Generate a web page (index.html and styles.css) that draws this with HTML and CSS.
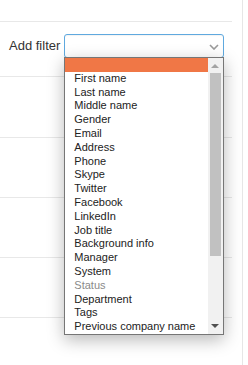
FILE: index.html
```html
<!DOCTYPE html>
<html lang="en">
<head>
    <meta charset="UTF-8">
    <title>Filters</title>
    <link rel="stylesheet" href="styles.css">
</head>
<body>
    <div class="page">
        <div class="panel">
            <div class="row row-head"></div>
            <div class="row row-filter">
                <label class="filter-label" for="filter">Add filter</label>
                <div class="select" id="filter">
                    <svg class="chevron" width="10" height="6" viewBox="0 0 10 6">
                        <path d="M1 1 L5 5 L9 1" fill="none" stroke="#9a9a9a" stroke-width="1.6"/>
                    </svg>
                    <div class="popup">
                        <ul class="options">
                            <li class="selected"></li>
                            <li>First name</li>
                            <li>Last name</li>
                            <li>Middle name</li>
                            <li>Gender</li>
                            <li>Email</li>
                            <li>Address</li>
                            <li>Phone</li>
                            <li>Skype</li>
                            <li>Twitter</li>
                            <li>Facebook</li>
                            <li>LinkedIn</li>
                            <li>Job title</li>
                            <li>Background info</li>
                            <li>Manager</li>
                            <li>System</li>
                            <li class="disabled">Status</li>
                            <li>Department</li>
                            <li>Tags</li>
                            <li>Previous company name</li>
                        </ul>
                        <div class="scrollbar">
                            <span class="arrow arrow-up"></span>
                            <span class="thumb"></span>
                            <span class="arrow arrow-down"></span>
                        </div>
                    </div>
                </div>
            </div>
            <div class="row row-first"></div>
            <div class="row"></div>
            <div class="row"></div>
            <div class="row"></div>
        </div>
        <div class="edge"></div>
    </div>
</body>
</html>
```

FILE: styles.css
```css
* {
    box-sizing: border-box;
    font-family: 'Liberation Sans', Arial, sans-serif;
}

body {
    margin: 0;
    background-color: #fff;
    color: #333;
}

.page {
    display: flex;
    height: 365px;
}

.panel {
    width: 232px;
}

.edge {
    width: 1px;
    margin-left: 10px;
    background-color: #e6e6e6;
}

.row {
    height: 60px;
    border-bottom: 1px solid #e8e8e8;
}

.row-head {
    height: 22px;
}

.row-first {
    height: 61px;
}

.row-filter {
    height: 55px;
    display: flex;
    align-items: flex-start;
    padding: 12px 0 0 9px;
}

.filter-label {
    font-size: 13px;
    line-height: 24px;
    margin-right: 4px;
    color: #333;
}

.select {
    position: relative;
    width: 160px;
    height: 24px;
    border: 1px solid #5fa9df;
    border-radius: 3px;
    background-color: #fff;
    box-shadow: inset 0 1px 1px rgba(0, 0, 0, 0.05);
}

.chevron {
    position: absolute;
    right: 4px;
    top: 9px;
}

.popup {
    position: absolute;
    top: 22px;
    left: -1px;
    width: 160px;
    height: 278px;
    border: 1px solid #767676;
    background-color: #fff;
    display: flex;
    box-shadow: 0 5px 16px rgba(0, 0, 0, 0.28);
    z-index: 2;
}

.options {
    list-style: none;
    margin: 0;
    padding: 0;
    flex: 1;
}

.options li {
    height: 13.8px;
    line-height: 13.8px;
    font-size: 11px;
    padding-left: 9px;
    color: #222;
    white-space: nowrap;
}

.options .selected {
    background-color: #f07746;
}

.options .disabled {
    color: #8a8a8a;
}

.scrollbar {
    position: relative;
    width: 15px;
    background-color: #f1f1f1;
}

.thumb {
    position: absolute;
    top: 15px;
    left: 2px;
    width: 11px;
    height: 183px;
    background-color: #c1c1c1;
}

.arrow {
    position: absolute;
    left: 3px;
    width: 0;
    height: 0;
    border-left: 4px solid transparent;
    border-right: 4px solid transparent;
}

.arrow-up {
    top: 6px;
    border-bottom: 4px solid #a3a3a3;
}

.arrow-down {
    bottom: 6px;
    border-top: 4px solid #505050;
}
```
